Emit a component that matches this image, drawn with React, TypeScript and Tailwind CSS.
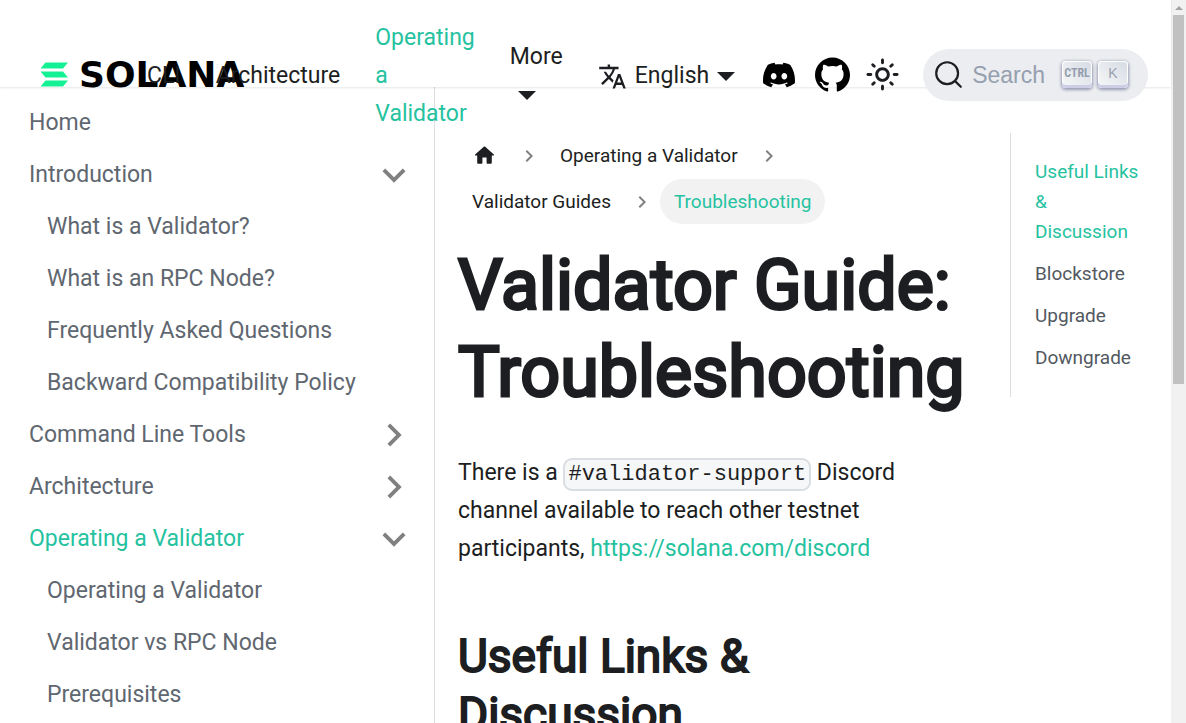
import React from "react";
import { SiDiscord, SiGithub } from "react-icons/si";
import { MdKeyboardArrowDown, MdKeyboardArrowRight, MdOutlineLightMode, MdTranslate } from "react-icons/md";

type SidebarItem = {
  label: string;
  nested?: boolean;
  active?: boolean;
  state?: "open" | "closed";
};

const sidebarItems: SidebarItem[] = [
  { label: "Home" },
  { label: "Introduction", state: "open" },
  { label: "What is a Validator?", nested: true },
  { label: "What is an RPC Node?", nested: true },
  { label: "Frequently Asked Questions", nested: true },
  { label: "Backward Compatibility Policy", nested: true },
  { label: "Command Line Tools", state: "closed" },
  { label: "Architecture", state: "closed" },
  { label: "Operating a Validator", state: "open", active: true },
  { label: "Operating a Validator", nested: true },
  { label: "Validator vs RPC Node", nested: true },
  { label: "Prerequisites", nested: true },
];

const tocItems = ["Useful Links & Discussion", "Blockstore", "Upgrade", "Downgrade"];

function Caret() {
  return (
    <span className="ml-2 inline-block border-x-9 border-t-9 border-x-transparent border-t-[#1c1e21] align-middle" />
  );
}

function Logo() {
  return (
    <a href="#" aria-label="Solana" className="flex w-[107px] shrink-0 items-center gap-[11px] whitespace-nowrap">
      <svg viewBox="0 0 28 25" className="h-[25px] w-[28px] shrink-0" fill="#14f195" aria-hidden="true">
        <path d="M5.5 0.5H28L23 6.5H0.5Z" />
        <path d="M0.5 9.5H23L28 15.5H5.5Z" />
        <path d="M5.5 18.5H28L23 24.5H0.5Z" />
      </svg>
      <span className="font-['DejaVu_Sans'] text-[36px] leading-[25px] font-bold text-black">SOLANA</span>
    </a>
  );
}

function Key({ children }: { children: React.ReactNode }) {
  return (
    <kbd className="flex h-[27px] w-[30px] items-center justify-center rounded-[4px] bg-linear-to-bl from-[#d5dbe4] to-[#f8f8f8] pb-[4px] text-[#969faf] shadow-[inset_0_-3px_0_0_#cdcde6,inset_0_0_1px_1px_#fff,0_1px_3px_1px_rgba(30,35,90,0.4)]">
      {children}
    </kbd>
  );
}

function Header() {
  return (
    <header className="relative z-10 h-[87px] shrink-0 bg-white pt-3 shadow-[0_1px_2px_0_rgba(0,0,0,0.1)]">
      <nav className="flex items-center pr-[23px] pl-10 leading-[38px]">
        <Logo />
        <div className="flex flex-1 items-center gap-[35px] pt-[7px] pb-1">
          <a href="#">CLI</a>
          <a href="#">Architecture</a>
          <a href="#" className="w-min text-[#25c2a0]">
            Operating a Validator
          </a>
          <a href="#" className="w-min">
            More <Caret />
          </a>
          <a href="#" className="flex items-center whitespace-nowrap">
            <MdTranslate className="mr-2 size-[29px]" />
            English
            <Caret />
          </a>
        </div>
        <div className="flex items-center">
          <a href="#" aria-label="Discord" className="mr-5 text-black">
            <SiDiscord className="size-[32px]" />
          </a>
          <a href="#" aria-label="GitHub" className="mr-[15px] text-black">
            <SiGithub className="size-[35px]" />
          </a>
          <button type="button" aria-label="Toggle theme" className="mr-[23px]">
            <MdOutlineLightMode className="size-[35px]" />
          </button>
          <button
            type="button"
            className="flex h-[52px] items-center rounded-full bg-[#ebedf0] pr-5 pl-[11px] font-['Liberation_Sans',sans-serif] text-[#969faf]"
          >
            <svg viewBox="0 0 20 20" className="size-[29px]" aria-hidden="true">
              <path
                d="M14.386 14.386l4.0877 4.0877-4.0877-4.0877c-2.9418 2.9419-7.7115 2.9419-10.6533 0-2.9419-2.9418-2.9419-7.7115 0-10.6533 2.9418-2.9419 7.7115-2.9419 10.6533 0 2.9419 2.9418 2.9419 7.7115 0 10.6533z"
                stroke="#1c1e21"
                strokeWidth="1.5"
                fill="none"
                strokeLinecap="round"
                strokeLinejoin="round"
              />
            </svg>
            <span className="mr-[17px] ml-[9px]">Search</span>
            <span className="flex gap-[6px]">
              <Key>
                <span className="font-['Liberation_Sans_Narrow','Roboto_Condensed',sans-serif] text-[12px] leading-none font-bold">
                  CTRL
                </span>
              </Key>
              <Key>
                <span className="font-['Liberation_Sans',sans-serif] text-[14px] leading-none">K</span>
              </Key>
            </span>
          </button>
        </div>
      </nav>
    </header>
  );
}

function Sidebar() {
  return (
    <aside className="w-[435px] shrink-0 overflow-hidden border-r border-[#dadde1] pt-[10px] pr-[17px] pl-[29px] text-[#606770]">
      <ul>
        {sidebarItems.map((item, i) => (
          <li key={i} className={item.nested ? "pl-[18px]" : ""}>
            <a
              href="#"
              className={
                item.active
                  ? "flex h-[52px] items-center justify-between text-[#25c2a0]"
                  : "flex h-[52px] items-center justify-between"
              }
            >
              {item.label}
              {item.state === "open" && <MdKeyboardArrowDown className="size-[46px] text-[#808080]" />}
              {item.state === "closed" && <MdKeyboardArrowRight className="size-[46px] text-[#808080]" />}
            </a>
          </li>
        ))}
      </ul>
    </aside>
  );
}

function Separator() {
  return (
    <span className="flex w-[35px] justify-center text-[#808080]">
      <MdKeyboardArrowRight className="size-6" />
    </span>
  );
}

function Breadcrumbs() {
  return (
    <nav aria-label="Breadcrumbs">
      <ul className="flex flex-wrap gap-y-px text-[19px] leading-[45px]">
        <li className="flex items-center">
          <a href="#" aria-label="Home page" className="px-[14px]">
            <svg viewBox="0 0 24 24" className="size-[25px]" fill="currentColor" aria-hidden="true">
              <path d="M10 19v-5h4v5c0 .55.45 1 1 1h3c.55 0 1-.45 1-1v-7h1.7c.46 0 .68-.57.33-.87L12.67 3.6c-.38-.34-.96-.34-1.34 0l-8.36 7.53c-.34.3-.13.87.33.87H5v7c0 .55.45 1 1 1h3c.55 0 1-.45 1-1z" />
            </svg>
          </a>
          <Separator />
        </li>
        <li className="flex items-center">
          <a href="#" className="px-[14px]">
            Operating a Validator
          </a>
          <Separator />
        </li>
        <li className="flex items-center">
          <a href="#" className="px-[14px]">
            Validator Guides
          </a>
          <Separator />
        </li>
        <li className="rounded-full bg-[#f2f2f2] px-[14px] text-[#25c2a0]">Troubleshooting</li>
      </ul>
    </nav>
  );
}

function Article() {
  return (
    <article className="min-w-0 px-[23px]">
      <Breadcrumbs />
      <h1 className="mt-[18px] mb-[38px] text-[70px] leading-[87px] [-webkit-text-stroke:3px_#1c1e21]">
        Validator Guide: Troubleshooting
      </h1>
      <p className="leading-[38px]">
        There is a{" "}
        <code className="rounded-[9px] border-2 border-[#dadde1] bg-[#f6f7f8] px-[3px] py-[2px] font-['Liberation_Mono',monospace] text-[22px] leading-none">
          #validator-support
        </code>{" "}
        Discord channel available to reach other testnet participants,{" "}
        <a href="#" className="text-[#25c2a0]">
          https://solana.com/discord
        </a>
      </p>
      <h2 className="mt-[59px] text-[46px] leading-[58px] [-webkit-text-stroke:2px_#1c1e21]">
        Useful Links &amp; Discussion
      </h2>
    </article>
  );
}

function TableOfContents() {
  return (
    <div className="px-[23px]">
      <ul className="flex flex-col gap-3 border-l border-[#dadde1] py-6 pr-2 pl-6 text-[19px] leading-[30px] text-[#525860]">
        {tocItems.map((label, i) => (
          <li key={label}>
            <a href="#" className={i === 0 ? "block text-[#25c2a0]" : "block"}>
              {label}
            </a>
          </li>
        ))}
      </ul>
    </div>
  );
}

function Scrollbar() {
  return (
    <div aria-hidden="true" className="flex w-[15px] shrink-0 flex-col items-center bg-[#f1f1f1]">
      <div className="flex h-[15px] items-center">
        <span className="border-x-4 border-b-4 border-x-transparent border-b-[#a3a3a3]" />
      </div>
      <div className="h-[51%] w-[11px] bg-[#c1c1c1]" />
    </div>
  );
}

export default function App() {
  return (
    <div className="flex h-screen overflow-hidden bg-white font-[Roboto,sans-serif] text-[23px] text-[#1c1e21]">
      <div className="flex min-w-0 flex-1 flex-col">
        <Header />
        <div className="flex min-h-0 flex-1">
          <Sidebar />
          <main className="grid min-w-0 flex-1 grid-cols-[3fr_1fr] items-start overflow-hidden pt-[46px]">
            <Article />
            <TableOfContents />
          </main>
        </div>
      </div>
      <Scrollbar />
    </div>
  );
}
